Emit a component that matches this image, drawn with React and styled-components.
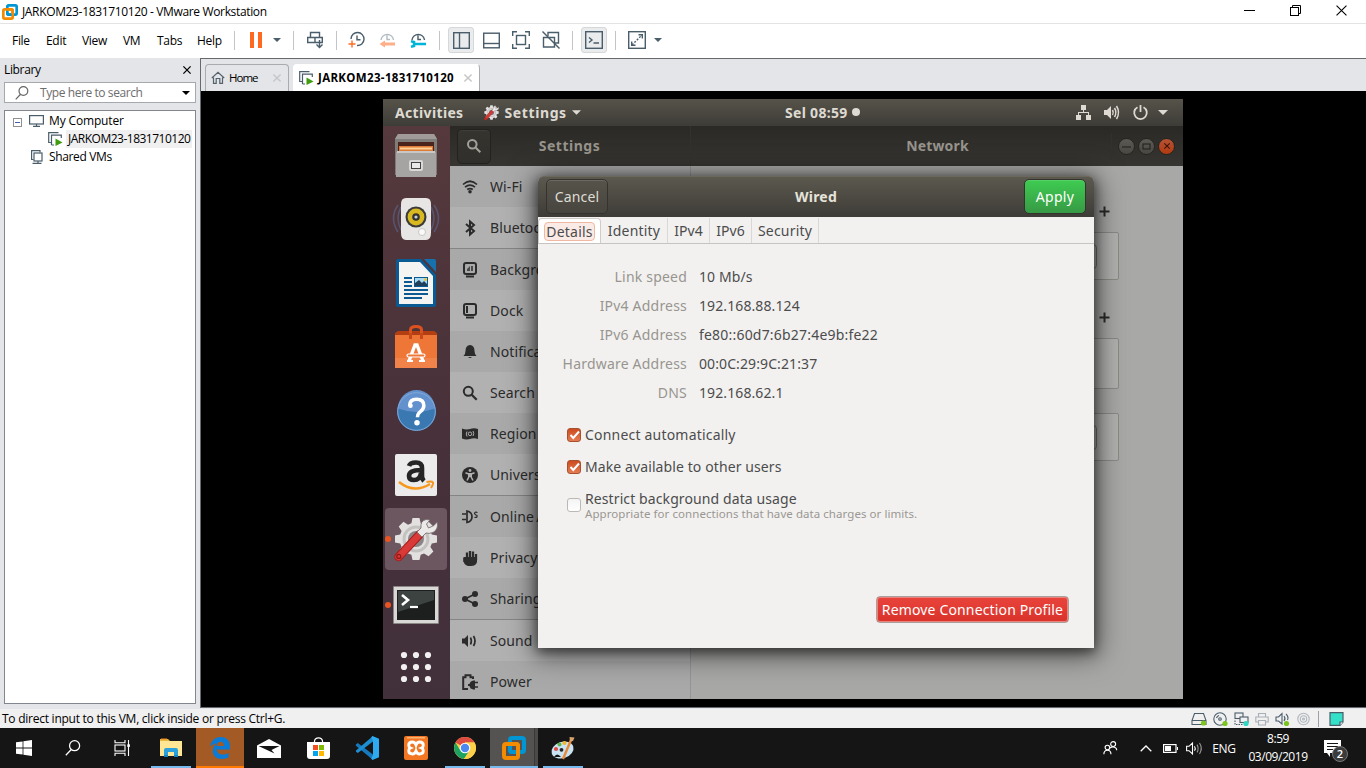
import React from 'react';
import styled, { createGlobalStyle, css } from 'styled-components';

const Global = createGlobalStyle`
  * { box-sizing: border-box; }
  html, body { margin: 0; padding: 0; background: #000; overflow: hidden; }
  svg { display: block; flex: none; overflow: visible; }
`;

const ui = css`font-family: "Open Sans", "Noto Sans", sans-serif; font-size: 12px; letter-spacing: -0.35px;`;
const gnome = css`font-family: "Noto Sans", "Open Sans", sans-serif; font-size: 14px; letter-spacing: 0.1px;`;

const Screen = styled.div`
  width: 1366px; height: 768px; display: flex; flex-direction: column;
  overflow: hidden; color: #000; white-space: nowrap; ${ui}
`;
const Text = styled.span`
  ${p => p.$ls !== undefined && css`letter-spacing: ${p.$ls}px;`}
  flex: none;
`;

/* ---------- host window ---------- */
const TitleBar = styled.header`
  height: 24px; background: #fff; display: flex; align-items: center; flex: none;
  padding: 0 19px 0 2px; border-bottom: 1px solid #e3e3e3;
`;
const TitleText = styled(Text)`margin-left: 4px; flex: 1;`;
const WinButtons = styled.div`display: flex; gap: 35px; align-items: center; margin-top: -3px;`;

const ToolBar = styled.nav`
  height: 34px; background: #fff; display: flex; align-items: center; flex: none; padding: 0 0 2px 12px;
`;
const MenuItem = styled.span`width: ${p => p.$w}px; flex: none; letter-spacing: -0.3px;`;
const Sep = styled.i`width: 1px; height: 19px; background: #c3c5c8; flex: none; margin: 0 ${p => p.$r ?? 0}px 0 ${p => p.$l ?? 0}px;`;
const Slot = styled.span`
  width: ${p => p.$w}px; height: 26px; display: flex; align-items: center; justify-content: center; flex: none;
  gap: ${p => p.$gap ?? 0}px; margin-right: ${p => p.$mr ?? 0}px; padding-left: ${p => p.$pl ?? 0}px;
  ${p => p.$on && css`background: #e9ebec; border: 1px solid #d5d7d8; border-radius: 3px;`}
`;

const Body = styled.main`height: 651px; display: flex; flex: none; background: #e3e5e8;`;
const Library = styled.aside`width: 200px; padding: 0 4px 5px; display: flex; flex-direction: column; flex: none;`;
const LibraryHead = styled.div`height: 24px; display: flex; align-items: center; justify-content: space-between; padding: 0 5px 1px 0;`;
const SearchBox = styled.div`
  height: 21px; border: 1px solid #a5a8ad; background: #fff; display: flex; align-items: center;
  padding: 0 5px 0 10px; color: #6d6d6d; flex: none;
`;
const SearchLabel = styled(Text)`margin-left: 11px; flex: 1;`;
const Tree = styled.div`flex: 1; margin-top: 7px; border: 1px solid #82878f; background: #fff; padding-top: 1px;`;
const TreeRow = styled.div`height: 18px; display: flex; align-items: center; padding-left: ${p => p.$pad}px;`;
const Expander = styled.span`margin: 2px 7px 0 0;`;
const TreeLabel = styled(Text)`
  height: 18px; line-height: 18px; padding: 0 2px; margin-left: 3px;
  background: ${p => (p.$sel ? '#f0f0f0' : 'transparent')};
`;

const Main = styled.section`
  flex: 1; border: 1px solid #66696d; border-right: 0; display: flex; flex-direction: column; margin-bottom: 1px;
`;
const Tabs = styled.div`height: 32px; display: flex; align-items: flex-end; padding-left: 4px; flex: none;`;
const Tab = styled.div`
  width: ${p => p.$w}px; height: 27px; display: flex; align-items: center; padding: 0 7px 1px 5px;
  border: 1px solid ${p => (p.$active ? '#fff' : '#a9abae')}; border-right-color: #a9abae; border-bottom: 0; border-radius: 4px 4px 0 0;
  background: ${p => (p.$active ? '#fff' : '#e3e5e8')}; margin-right: 4px; font-weight: ${p => (p.$active ? 700 : 400)};
  font-size: 11.5px;
`;
const TabLabel = styled(Text)`margin-left: 4px; flex: 1;`;
const Stage = styled.div`flex: 1; background: #000; padding: 8px 0 0 182px;`;

const StatusBar = styled.footer`
  height: 19px; background: #f0f0f0; display: flex; align-items: center; flex: none;
  padding: 0 22px 0 2px;
`;
const StatusText = styled(Text)`flex: 1;`;
const StatusIcons = styled.div`display: flex; align-items: center; gap: 6px; padding-top: 1px;`;
const StatusRule = styled.i`width: 1px; height: 16px; background: #9aa0a5; margin: 0 3px 0 1px;`;

/* ---------- taskbar ---------- */
const TaskBar = styled.footer`height: 40px; background: #151515; display: flex; flex: none; color: #fff; font-size: 12px;`;
const TaskButtons = styled.div`display: flex; gap: 1px; flex: 1;`;
const TaskButton = styled.div`
  width: 48px; height: 40px; display: flex; align-items: center; justify-content: center; flex: none;
  background: ${p => p.$bg || 'transparent'};
  box-shadow: ${p => (p.$wide ? `inset 0 -2px ${p.$wide}` : 'none')};
  position: relative;
  &::after { content: ''; display: ${p => (p.$open ? 'block' : 'none')}; position: absolute; left: 4px; right: 4px; bottom: 0; height: 2px; background: #76b9ed; }
`;
const Tray = styled.div`display: flex; align-items: center; padding-right: 16px;`;
const TrayItem = styled.div`width: ${p => p.$w}px; display: flex; justify-content: center;`;
const Clock = styled.div`width: 72px; text-align: center; line-height: 18px; height: 38px; padding-top: 1px; letter-spacing: -0.45px;`;
const Notice = styled.div`width: 36px; position: relative; display: flex; justify-content: center;`;
const Badge = styled.span`
  position: absolute; left: 18px; top: 6px; width: 16px; height: 16px; border-radius: 50%; background: #3b3b3b;
  border: 1px solid #777; font-size: 11px; font-weight: 600; line-height: 14px; text-align: center; letter-spacing: 0;
`;

/* ---------- guest desktop ---------- */
const Guest = styled.div`
  width: 800px; height: 600px; display: flex; flex-direction: column; position: relative; overflow: hidden; ${gnome}
`;
const TopBar = styled.div`
  height: 27px; flex: none; display: grid; grid-template-columns: 390px 1fr auto; align-items: center;
  background: linear-gradient(#56534a, #3e3c37); color: #dedad2; font-weight: 700; padding: 0 15px 1px 12px;
`;
const TopGroup = styled.div`display: flex; align-items: center; gap: ${p => p.$gap}px;`;
const AppName = styled(Text)`margin: 0 5px 0 6px;`;
const StartGap = styled.span`width: ${p => p.$w}px;`;
const MenuCaret = styled.span`margin-left: -3px;`;
const Desktop = styled.div`flex: 1; display: flex; min-height: 0;`;
const Dock = styled.div`
  width: 67px; flex: none; background: linear-gradient(#55393c, #46303a 60%, #41303a); display: flex; flex-direction: column; overflow: hidden;
`;
const DockItem = styled.div`
  height: ${p => p.$h ?? 64}px; flex: none; display: flex; align-items: center; padding-left: 2px;
`;
const DockTile = styled.div`
  width: 62px; height: 62px; display: flex; align-items: center; justify-content: center; border-radius: 4px;
  background: ${p => (p.$on ? '#6c565f' : 'transparent')};
`;
const Dot = styled.i`width: 6px; height: 6px; border-radius: 50%; background: #e95420; margin-right: -6px; flex: none; z-index: 1;`;

const Window = styled.div`flex: 1; display: flex; flex-direction: column; min-width: 0;`;
const HeaderBar = styled.div`
  height: 40px; flex: none; display: flex; align-items: center; color: #97948d; font-weight: 700;
  background: linear-gradient(#2a2925, #373531);
`;
const HeaderLeft = styled.div`width: 241px; height: 40px; display: flex; align-items: center; padding-left: 7px; border-right: 1px solid #32312d;`;
const SearchButton = styled.div`
  width: 34px; height: 35px; border: 1px solid #23221f; border-radius: 5px; display: flex; align-items: center; justify-content: center;
  background: linear-gradient(#35342f, #302f2b); box-shadow: inset 0 1px rgba(255,255,255,.05);
`;
const HeaderTitle = styled.div`flex: 1; text-align: center; letter-spacing: ${p => p.$ls ?? 0}px; padding: 0 ${p => p.$pr ?? 0}px 2px ${p => p.$pl ?? 0}px;`;
const WindowButtons = styled.div`display: flex; gap: 3px; padding: 0 8px 0 6px; border-left: 1px solid #32312d; height: 27px; align-items: center;`;
const RoundButton = styled.div`
  width: 17px; height: 17px; border-radius: 50%; border: 1px solid #25241f; display: flex; align-items: center; justify-content: center;
  background: ${p => (p.$close ? 'linear-gradient(#b45336, #b23a10)' : 'linear-gradient(#5b5a55, #484742)')};
`;
const Panes = styled.div`flex: 1; display: flex; min-height: 0;`;
const SideList = styled.div`width: 241px; flex: none; border-right: 1px solid #959593; overflow: hidden; background: #aaa;`;
const SideRow = styled.div`
  height: ${p => (p.$sep ? 42 : 41)}px; display: flex; align-items: center; padding-left: 12px; color: #2b2b2b; word-spacing: -1.5px;
  background: ${p => (p.$alt ? '#b1b1b1' : '#a9a9a9')}; border-bottom: ${p => (p.$sep ? '1px solid #858585' : '0')};
`;
const SideIcon = styled.span`width: 16px; height: 16px; display: flex; align-items: center; justify-content: center; margin-right: 12px;`;
const Content = styled.div`flex: 1; background: #a8a8a6; padding: 32px 64px 0 66px;`;
const SectionHead = styled.div`height: ${p => p.$h}px; padding-top: 8px; padding-right: 9px; display: flex; justify-content: flex-end;`;
const Card = styled.div`
  height: ${p => p.$h}px; margin-bottom: ${p => p.$mb}px; border: 1px solid #8b8b86; border-radius: 2px; background: #b1b1b0;
  display: flex; align-items: center; justify-content: flex-end; padding-right: 21px;
`;
const GearButton = styled.div`width: 34px; height: 25px; border: 1px solid #757570; border-radius: 4px;`;

/* ---------- connection dialog ---------- */
const Dialog = styled.div`
  position: absolute; left: 155px; top: 77px; width: 556px; height: 472px; border-radius: 6px 6px 0 0; overflow: visible;
  background: #f2f1f0; box-shadow: 0 3px 12px 1px rgba(0,0,0,.5), 0 4px 28px 4px rgba(0,0,0,.5); color: #4c4c4c;
`;
const DialogHead = styled.div`
  height: 41px; border-radius: 6px 6px 0 0; display: flex; align-items: center; justify-content: space-between; padding: 0 8px 0 8px;
  background: linear-gradient(#5c594f, #3e3c37); box-shadow: inset 0 1px #6a675d; color: #e6e3da;
`;
const HeadButton = styled.div`
  width: ${p => p.$w}px; height: 35px; border-radius: 5px; border: 1px solid #34332e; text-align: center; line-height: 33px;
  letter-spacing: ${p => p.$ls}px; color: ${p => (p.$go ? '#fff' : '#dfdcd3')};
  background: ${p => (p.$go ? 'linear-gradient(#3ecb51, #379a45)' : 'linear-gradient(#56534a, #47453f)')};
  box-shadow: inset 0 1px rgba(255,255,255,.13);
`;
const TabStrip = styled.div`height: 27px; display: flex; border-bottom: 1px solid #c6c4c1; padding: 1px 0 0;`;
const PageTab = styled.div`
  width: ${p => p.$w}px; height: 25px; display: flex; align-items: center; justify-content: center; letter-spacing: ${p => p.$ls ?? 0.2}px;
  border-right: 1px solid #dad8d6;
  ${p => p.$on && css`background: #fff; border: 1px solid #cfccc9; border-bottom: 0; border-radius: 4px 4px 0 0;`}
`;
const FocusRing = styled.span`border: 1px solid #f0b7a1; background: #fbebe6; border-radius: 4px; line-height: 17px; height: 19px; padding: 0 1px;`;
const Facts = styled.dl`
  margin: 18px 0 0; display: grid; grid-template-columns: 149px 1fr; column-gap: 12px; grid-auto-rows: 29px; align-items: center;
`;
const FactName = styled.dt`text-align: right; color: #98958f; letter-spacing: 0.2px;`;
const FactValue = styled.dd`margin: 0; letter-spacing: ${p => p.$ls ?? 0.1}px;`;
const CheckRow = styled.label`display: flex; align-items: center; height: ${p => p.$h ?? 32}px; padding-left: 29px; gap: 4px;`;
const CheckList = styled.div`margin-top: 11px;`;
const Box = styled.span`
  width: 14px; height: 14px; border-radius: 3px; display: flex; align-items: center; justify-content: center; flex: none; margin-top: ${p => (p.$on ? 1 : 0)}px;
  border: 1px solid ${p => (p.$on ? '#a9502f' : '#bcb9b5')}; background: ${p => (p.$on ? 'linear-gradient(#cb4c20, #e57b51)' : 'linear-gradient(#f4f4f4,#fff)')};
`;
const CheckText = styled.div`display: flex; flex-direction: column; line-height: 16px; padding-top: 2px;`;
const Hint = styled.span`font-size: 11.5px; color: #9a9792; line-height: 14px; letter-spacing: 0.06px;`;
const DialogFoot = styled.div`display: flex; justify-content: flex-end; padding: 68px 25px 0 0;`;
const RemoveButton = styled.div`
  width: 193px; height: 27px; border: 1px solid #a8a09b; border-radius: 4px; color: #fff; text-align: center; line-height: 25px;
  background: linear-gradient(#e9443c, #d9322a); box-shadow: inset 0 0 0 1px #f0827c; letter-spacing: 0.15px;
`;

/* ---------- icons ---------- */
const ink = '#4a5d6b';
const VmLogo = ({ s = 16 }) => (
  <svg width={s} height={s} viewBox="0 0 24 24" fill="none" strokeWidth="4">
    <rect x="8" y="2" width="14" height="14" rx="2" stroke="#0095d3" />
    <rect x="2" y="8" width="14" height="14" rx="2" stroke="#f38b00" />
    <path d="M8 12.5V14Q8 16 10 16H14" stroke="#0095d3" />
    <path d="M10 8H14Q16 8 16 10V14" stroke="#f38b00" />
  </svg>
);
const Caret = ({ w = 8, h = 4, c = ink }) => (
  <svg width={w} height={h} viewBox="0 0 8 4"><path d="M0 0H8L4 4Z" fill={c} /></svg>
);
const Cross = ({ s = 9, c = '#000', w = 1.2 }) => (
  <svg width={s} height={s} viewBox="0 0 10 10" stroke={c} strokeWidth={w}><path d="M.5 .5L9.5 9.5M9.5 .5L.5 9.5" /></svg>
);
const Line = ({ w = 20, h = 20, children, c = ink, sw = 1.4 }) => (
  <svg width={w} height={h} viewBox={`0 0 ${w} ${h}`} fill="none" stroke={c} strokeWidth={sw}>{children}</svg>
);
const SendKeys = () => (
  <Line w={16} h={18}><path d="M3.5 6.5V1.5H12.5V6.5M.7 6.5H15.3V11.5H.7ZM8 6.5V11.5M12.5 9V16M9.5 13.5L12.5 16.5L15.5 13.5" /></Line>
);
const ClockIcon = ({ mode }) => (
  <Line w={18} h={18} c={mode === 'back' ? '#b4bcc3' : ink}>
    <path d={mode === 'add' ? 'M3 8A6.5 6.5 0 1 1 9 14.5M9 4.5V8.7H12.5' : 'M3 9A6.3 6.3 0 0 1 15.5 9M9 4.5V8.5H12'} />
    {mode === 'add' && <path d="M4 9.5V16.5M.5 13H7.5" stroke="#ff6a22" />}
    {mode === 'back' && <path d="M17 13H6" stroke="#ffae88" strokeWidth="3" />}
    {mode === 'back' && <path d="M7 9.5V16.5L1.5 13Z" fill="#ffae88" stroke="none" />}
    {mode === 'manage' && <path d="M17 13H6M2 10.2L5 11V15L2 15.8" stroke="#00b4d5" strokeWidth="2.6" />}
  </Line>
);
const LibraryPane = () => <Line w={17} h={17}><rect x=".7" y=".7" width="15.6" height="15.6" /><path d="M6.5 1V16" /></Line>;
const BottomPane = () => <Line w={17} h={17}><rect x=".7" y="1.2" width="15.6" height="14.6" /><path d="M1 11.5H16" /></Line>;
const FitGuest = () => <Line w={18} h={18}><path d="M.7 5V.7H5M13 .7H17.3V5M17.3 13V17.3H13M5 17.3H.7V13" /><rect x="4.5" y="4.5" width="9" height="9" /></Line>;
const Unity = () => <Line w={18} h={18}><path d="M6 5V1.5H16.5V12H13M1.5 6.5V16H12.5V6.5Z" /><path d="M.5 .5L17.5 17.5" /></Line>;
const ConsoleIcon = () => <Line w={18} h={18}><rect x=".7" y=".7" width="16.6" height="16.6" /><path d="M4 6.5L7 9L4 11.5M8.5 12H14" /></Line>;
const FullIcon = () => <Line w={18} h={18}><rect x=".7" y=".7" width="16.6" height="16.6" /><path d="M10.5 3.7H14.3V7.5M3.7 10.5V14.3H7.5" /><path d="M4 14L14 4" strokeDasharray="2 1.4" /></Line>;
const HomeIcon = () => <Line w={14} h={13} c="#55626d" sw={1.2}><path d="M.8 7L7 1.2L13.2 7M2.5 6.5V12.3H5.2V7.5H8.8V12.3H11.5V6.5" /></Line>;
const VmRunning = () => (
  <Line w={15} h={14} sw={1.2}><path d="M3 10.5H.7V.7H10.5M3.5 13V3.2H13.3V6M3.5 13H6" /><path d="M7.5 6.5L14.5 10.5L7.5 14Z" fill="#3f9c0e" stroke="none" /></Line>
);
const Monitor = () => <Line w={15} h={12} sw={1.2}><rect x=".6" y=".6" width="13.8" height="8.4" /><path d="M7.5 9V11M4 11.4H11" /></Line>;
const SharedVm = () => <Line w={12} h={14} sw={1.2}><path d="M2.5 9.5H.6V.6H9V2.5" /><rect x="3" y="3" width="8" height="8" /><path d="M7 11V13M1.5 13.4H10.5" /></Line>;
const Lens = ({ s = 14, c = '#666', w = 1.2, flip }) => (
  <svg width={s} height={s} viewBox="0 0 14 14" fill="none" stroke={c} strokeWidth={w}>
    {flip ? <path d="M5.3 8.5L.7 13.3M4 5A4.4 4.4 0 1 0 12.8 5A4.4 4.4 0 1 0 4 5" /> : <path d="M8.8 8.8L13.3 13.3M1 5.3A4.3 4.3 0 1 0 9.6 5.3A4.3 4.3 0 1 0 1 5.3" />}
  </svg>
);
const Green = ({ x, y, c = '#7cc51c' }) => <circle cx={x} cy={y} r="2.6" fill={c} stroke="none" />;
const StatusSet = () => (
  <StatusIcons>
    <Line w={16} h={14} sw={1.1}><path d="M3.5 1.5H12.5L15 8.5V12.5H1V8.5ZM1 8.5H15" /><Green x={12.5} y={11} /></Line>
    <Line w={15} h={14} sw={1.1}><circle cx="7" cy="7" r="6.2" /><circle cx="7" cy="7" r="1.3" /><path d="M3.5 6A4 4 0 0 1 6 3.5" /><Green x={12} y={11.5} /></Line>
    <Line w={15} h={14} sw={1.1}><rect x="1" y="1" width="8" height="5.5" /><rect x="6" y="5" width="8" height="5.5" fill="#f0f0f0" /><path d="M1 8.5V12.5H9" strokeDasharray="1.5 1" /><Green x={12} y={11.5} c="#2fd6c2" /></Line>
    <Line w={14} h={14} sw={1.1} c="#a8b0b7"><path d="M3.5 5V1.5H10.5V5M3.5 10H.8V5H13.2V10H10.5M3.5 8.5H10.5V13H3.5Z" /></Line>
    <Line w={15} h={14} sw={1.1}><path d="M1 5H3.5L7 1.5V12L3.5 9H1ZM9 4Q11 6.5 9 9M11 2Q14 5 12.5 8" /><Green x={11.5} y={11.5} /></Line>
    <Line w={15} h={14} sw={1.1} c="#b0b7bd"><circle cx="7.5" cy="7" r="5.7" /><circle cx="7.5" cy="7" r="3.2" /><circle cx="7.5" cy="7" r="1" /></Line>
    <StatusRule />
    <Line w={16} h={14} sw={1.2}><path d="M2 .6H15V10L12 13.4H2Z" fill="#35e0c8" /><path d="M15 10H12V13.4" fill="#fff" /></Line>
  </StatusIcons>
);

const WinStart = () => <svg width="16" height="16" viewBox="0 0 16 16" fill="#fff"><path d="M0 2.3L6.6 1.4V7.6H0ZM7.4 1.3L16 0V7.6H7.4ZM0 8.4H6.6V14.6L0 13.7ZM7.4 8.4H16V16L7.4 14.8Z" /></svg>;
const TaskView = () => (
  <svg width="17" height="16" viewBox="0 0 17 16" fill="none" stroke="#fff" strokeWidth="1.1"><path d="M1 0V2.7H11V0M1 16V13.3H11V16M14.5 0V16" /><rect x="1" y="5" width="10" height="6" /><rect x="13.3" y="4.3" width="2.6" height="2.6" fill="#fff" stroke="none" /></svg>
);
const Explorer = () => (
  <svg width="22" height="20" viewBox="0 0 22 20"><path d="M0 1H8L10 3H21Q22 3 22 4V18H0Z" fill="#e8b93c" /><path d="M1 3H22V18H0V3Z" fill="#ffe695" /><path d="M1 1H7" stroke="#f08a24" strokeWidth="1" /><path d="M4 19V12Q4 10 6 10H16Q18 10 18 12V19H14V14H8V19Z" fill="#2aa0dc" /><path d="M4 18H8M14 18H18" stroke="#1583bf" strokeWidth="2" /></svg>
);
const Edge = () => (
  <svg width="20" height="22" viewBox="0 0 20 22"><path d="M0 10C1 3 6 0 10.8 0C17 0 20 4.6 20 9.2V12.4H6.8C7 16 10 17.5 13 17.5C15.3 17.5 17.3 16.8 18.6 16V20.3C17 21.3 14.6 22 12 22C6 22 2.8 18.5 2.8 14C2.8 10.8 4.5 8 7.4 6.6C4.2 6.8 1.6 8 0 10ZM6.9 8.9H14C14 6.5 13 4.8 10.6 4.8C8.4 4.8 7.1 6.8 6.9 8.9Z" fill="#0b7bd8" /></svg>
);
const Mail = () => <svg width="24" height="19" viewBox="0 0 24 19"><path d="M0 6.5L12 0L24 6.5V19H0Z" fill="#fff" /><path d="M1.5 7H22.5L14.5 11L17.5 14.5Z" fill="#151515" /></svg>;
const Store = () => (
  <svg width="23" height="22" viewBox="0 0 23 22"><path d="M7.5 6V4Q8 .8 11.5 .8Q15 .8 15.5 4V6" fill="none" stroke="#fff" strokeWidth="1.2" /><path d="M0 5H23V19Q23 22 20 22H3Q0 22 0 19Z" fill="#fff" /><path d="M6 8H11V13H6Z" fill="#f25022" /><path d="M12 8H17V13H12Z" fill="#7fba00" /><path d="M6 14H11V19H6Z" fill="#00a4ef" /><path d="M12 14H17V19H12Z" fill="#ffb900" /></svg>
);
const Code = () => (
  <svg width="24" height="24" viewBox="0 0 24 24"><path d="M1.2 8.3L2.8 7L18 18.5V24L.9 9.8L.7 8.7Z" fill="#1679bd" /><path d="M1 15.7L2.8 17L18 5.5V0L1 14.6Z" fill="#1d8fd1" /><path d="M17.5 0L24 2.8V21.2L17.5 24L16.3 22.8L18 18.7V5.3L16.3 1.2Z" fill="#2fa9f0" /></svg>
);
const Xampp = () => (
  <svg width="24" height="24" viewBox="0 0 24 24"><rect width="24" height="24" rx="2" fill="#f37623" /><path d="M3 1.8H21" stroke="#ffc08a" strokeWidth="1.2" /><path d="M8.5 6Q11 6 12 9Q13 6 15.5 6Q19.3 6 19.3 9.2Q19.3 11.2 17.5 12Q19.3 12.8 19.3 14.8Q19.3 18 15.5 18Q13 18 12 15Q11 18 8.5 18Q4.7 18 4.7 14.8Q4.7 12.8 6.5 12Q4.7 11.2 4.7 9.2Q4.7 6 8.5 6Z" fill="none" stroke="#fff" strokeWidth="2.9" /></svg>
);
const Chrome = () => (
  <svg width="22" height="22" viewBox="0 0 22 22"><circle cx="11" cy="11" r="11" fill="#fcd048" /><path d="M11 11L1.5 5.5A11 11 0 0 1 20.6 5.6H11Z" fill="#de4c41" /><path d="M1.5 5.5A11 11 0 0 0 10 21.9L15.5 13.5L11 11L6 13Z" fill="#1ca261" /><path d="M11 5.6H20.6A11 11 0 0 1 10 21.9L15.8 13.5Z" fill="#fcd048" /><circle cx="11" cy="11" r="5.3" fill="#fff" /><circle cx="11" cy="11" r="4.2" fill="#4b88f2" /></svg>
);
const Paint = () => (
  <svg width="24" height="24" viewBox="0 0 24 24"><ellipse cx="11.5" cy="14" rx="11.3" ry="8.2" fill="#c9e3f2" transform="rotate(-18 11.5 14)" /><path d="M3 21Q6 16 10 21" fill="#151515" /><circle cx="5" cy="13" r="2.1" fill="#dd4b47" /><circle cx="8.5" cy="8.6" r="2" fill="#5cb54b" /><circle cx="13.5" cy="7" r="2.1" fill="#f4b52a" /><circle cx="10.5" cy="13.8" r="1.9" fill="#222" /><path d="M20 4L12 23" stroke="#e98935" strokeWidth="2.4" /><path d="M18.5 1L23.5 1.5L22 5L19 5.5Z" fill="#d8a570" /></svg>
);
const People = () => <svg width="15" height="16" viewBox="0 0 17 17" fill="none" stroke="#fff" strokeWidth="1.3"><circle cx="5" cy="8" r="2.6" /><circle cx="11.5" cy="4" r="2.8" /><path d="M1 15.5Q1 11 5 11Q9 11 9 15.5M8 8.5Q11.5 5.5 15 9Q15.5 10 15.5 11" /></svg>;
const Chevron = () => <svg width="12" height="7" viewBox="0 0 12 7" fill="none" stroke="#fff" strokeWidth="1.3"><path d="M.7 6.3L6 1L11.3 6.3" /></svg>;
const Battery = () => <svg width="15" height="9" viewBox="0 0 15 9"><rect x=".6" y=".6" width="12.4" height="7.8" fill="none" stroke="#fff" strokeWidth="1.2" /><path d="M2 2H8V7H2ZM14 3H15V6H14Z" fill="#fff" /></svg>;
const TrayVolume = () => <svg width="17" height="13" viewBox="0 0 17 13" fill="none" stroke="#fff" strokeWidth="1.1"><path d="M.6 4.3H3L6.5 1V12L3 8.7H.6ZM8.5 4.3Q10 6.5 8.5 8.7" /><path d="M11 2.6Q13.3 6.5 11 10.4M13.5 1Q17 6.5 13.5 12" stroke="#999" /></svg>;
const NoticeIcon = () => <svg width="17" height="17" viewBox="0 0 17 17"><path d="M0 0H17V13H6L6 17L3 13H0Z" fill="#fff" /><path d="M3 3.5H14M3 6.5H14M3 9.5H9" stroke="#151515" strokeWidth="1.1" /></svg>;

const gearPath = 'M18.5 1H25.5L26.7 6.3L30 7.7L34.6 4.8L39.4 9.6L36.4 14.1L37.8 17.5L43 18.5V25.5L37.8 26.6L36.4 30L39.4 34.5L34.6 39.3L30 36.4L26.7 37.8L25.5 43H18.5L17.4 37.8L14 36.4L9.5 39.3L4.7 34.5L7.6 30L6.2 26.6L1 25.5V18.5L6.2 17.5L7.6 14.1L4.7 9.6L9.5 4.8L14 7.7L17.4 6.3Z';
const SettingsIcon = ({ s = 44 }) => (
  <svg width={s} height={s} viewBox="0 0 44 44"><path d={gearPath} fill="#e2e1e0" /><circle cx="22" cy="22" r="12" fill="none" stroke="#c4c2c1" strokeWidth="3" /><circle cx="22" cy="22" r="8" fill="#8b8588" />
    <path d="M26 17L4.5 40" stroke="#a51d1d" strokeWidth="8.5" strokeLinecap="round" /><path d="M26 17L4.5 40" stroke="#d93a37" strokeWidth="6.5" strokeLinecap="round" /><circle cx="4.8" cy="39.4" r="2" fill="none" stroke="#8e1818" strokeWidth="1.2" />
    <path d="M23 15L27 11Q26 4 32 2.5L36 3L32.5 7L34.5 11L40 8.5L43 5Q45 12 39 15.5Q35 17 32 16L28 20Z" fill="#eceae8" stroke="#77706f" strokeWidth=".9" /></svg>
);
const Files = () => (
  <svg width="44" height="44" viewBox="0 0 44 44"><path d="M4 0H40L43 5V41H1V5Z" fill="#807c7a" /><path d="M4 0H40L43 5H1Z" fill="#a09b99" /><rect x="4" y="8" width="36" height="11" fill="#4b241c" /><path d="M5 12H39V18H5Z" fill="#e07a34" /><path d="M6 14.5H38" stroke="#ffd098" strokeWidth="2" /><path d="M2 19Q2 17 4 17H40Q42 17 42 19V43H2Z" fill="#a5a4a3" /><path d="M3 18H41" stroke="#d3d3d2" strokeWidth="1.5" /><rect x="15" y="26" width="14" height="11" rx="2" fill="#dad9d8" /><rect x="17.5" y="28.5" width="9" height="6" fill="#e9e9e9" stroke="#444" /></svg>
);
const Rhythmbox = () => (
  <svg width="46" height="46" viewBox="0 0 46 46"><path d="M5 9Q-4 22 5 36M41 9Q50 22 41 36M8 11Q2 22 8 34M38 11Q44 22 38 34" fill="none" stroke="#5c6791" strokeWidth="1.6" opacity=".6" /><path d="M13 2H33Q38 2 38 8V37Q38 44 33 44H13Q8 44 8 37V8Q8 2 13 2Z" fill="#e7e6e4" /><circle cx="23" cy="21" r="10.5" fill="#3b3b3b" /><circle cx="23" cy="21" r="8.4" fill="#d9b820" /><circle cx="23" cy="21" r="3.8" fill="#333" /><circle cx="23" cy="21" r="1.6" fill="#c9d0d6" /><circle cx="29" cy="36" r="3.5" fill="#fafafa" stroke="#c9c8c6" /></svg>
);
const Writer = () => (
  <svg width="40" height="48" viewBox="0 0 40 48"><path d="M2 0H25L40 16V46Q40 48 38 48H2Q0 48 0 46V2Q0 0 2 0Z" fill="#0a5a94" /><path d="M28 0H38Q40 0 40 2V13Z" fill="#1671ae" /><path d="M3 3H24L37 17V45H3Z" fill="#f4f4f3" /><path d="M8 19H16M8 23H16M8 27H16M8 31H32M8 35H32M8 39H26" stroke="#0a5a94" strokeWidth="2" /><rect x="18.5" y="18.5" width="13" height="9" fill="#a9dcf0" stroke="#0a5a94" /><path d="M19 27V24L23 21L26 24L28 22L31 25V27Z" fill="#20405a" /><circle cx="29.5" cy="20.5" r="1.5" fill="#f1c232" /></svg>
);
const Software = () => (
  <svg width="42" height="44" viewBox="0 0 42 44"><path d="M0 8L3 6H39L42 8V12H0Z" fill="#b23e12" /><path d="M15.5 14V5Q15.5 1.5 21 1.5Q26.5 1.5 26.5 5V14" fill="none" stroke="#dc521f" strokeWidth="3" /><path d="M0 10H42V43H0Z" fill="#ee7637" /><path d="M0 33H42V43H0Z" fill="#f1824a" /><path d="M15.5 14V8M26.5 14V8" stroke="#c8481a" strokeWidth="3" /><path d="M14 36L20 20H22L28 36" fill="none" stroke="#fff" strokeWidth="3.4" /><rect x="12" y="29" width="18" height="3" rx="1.5" fill="#ee7637" stroke="#fff" strokeWidth="1.2" /><path d="M12 36H18M24 36H30" stroke="#fff" strokeWidth="2" /></svg>
);
const Help = () => (
  <svg width="41" height="41" viewBox="0 0 42 42"><circle cx="21" cy="21" r="20" fill="#3a78b2" /><path d="M2 18A19 19 0 0 1 40 18Q21 25 2 18Z" fill="#6391cd" /><circle cx="21" cy="21" r="19.3" fill="none" stroke="#83a9d8" /><path d="M14 15C14 10 17 8.5 21 8.5C26 8.5 28.5 11 28.5 15C28.5 19 25.5 20.5 23.5 22.5Q22 24 22 27" fill="none" stroke="#fff" strokeWidth="3.6" /><circle cx="14.8" cy="15" r="2.4" fill="#fff" /><circle cx="21.5" cy="32.5" r="2.8" fill="#fff" /></svg>
);
const Amazon = () => (
  <svg width="42" height="42" viewBox="0 0 42 42"><rect width="42" height="42" rx="2" fill="#ebebeb" /><path d="M14 12Q15 8.5 21 8.5Q27 8.5 27 14V22Q27 25 29 27M26 16Q14 16 14 22Q14 26 19 26Q25 26 26 19" fill="none" stroke="#242424" strokeWidth="4.6" /><path d="M4 28Q19 40 35 30" fill="none" stroke="#f7981d" strokeWidth="2.6" /><path d="M31.5 28Q37 27 38 28.5Q38.5 30 36 34" fill="none" stroke="#f7981d" strokeWidth="2" /></svg>
);
const Terminal = () => (
  <svg width="46" height="38" viewBox="0 0 46 38"><rect width="46" height="38" rx="1" fill="#8a8785" /><rect x="1" y="1" width="44" height="36" fill="#d9d8d7" /><rect x="4" y="4" width="38" height="30" fill="#1c1f1e" /><path d="M5 5H41V14L5 26Z" fill="#3c4341" /><path d="M9 9L15 14L9 19" fill="none" stroke="#fff" strokeWidth="2.6" /><path d="M17 21H25" stroke="#fff" strokeWidth="2.2" /></svg>
);
const AppGrid = () => (
  <svg width="30" height="30" viewBox="0 0 30 30" fill="#f2f0f0">{[3, 15, 27].map(y => [3, 15, 27].map(x => <circle key={x + '-' + y} cx={x} cy={y} r="3.1" />))}</svg>
);

const NetIcon = () => <svg width="15" height="15" viewBox="0 0 15 15" fill="#dedad2"><path d="M5 0H10V5H5ZM0 10H5V15H0ZM10 10H15V15H10ZM7 5H8V7H13V10H12V8H3V10H2V7H7Z" /></svg>;
const VolIcon = () => <svg width="16" height="15" viewBox="0 0 16 15"><path d="M0 5H3L7 1V14L3 10H0Z" fill="#dedad2" /><path d="M8.5 5Q10 7.5 8.5 10M10.5 3Q13.2 7.5 10.5 12M12.5 1Q16.5 7.5 12.5 14" fill="none" stroke="#dedad2" strokeWidth="1.5" /></svg>;
const PowerIcon = () => <svg width="15" height="15" viewBox="0 0 15 15" fill="none" stroke="#dedad2" strokeWidth="1.8"><path d="M4.5 2.2A6.3 6.3 0 1 0 10.5 2.2M7.5 0V7" /></svg>;

const dark = '#2b2b2b';
const G = ({ children }) => <svg width="16" height="16" viewBox="0 0 16 16" fill={dark} stroke="none">{children}</svg>;
const sideIcons = {
  wifi: <G><g fill="none" stroke={dark} strokeWidth="1.7"><path d="M1 5.5Q8 -1 15 5.5M3 8.2Q8 4 13 8.2M5.2 10.5Q8 8.6 10.8 10.5" /></g><circle cx="8" cy="12.7" r="1.8" /></G>,
  bt: <G><path d="M4 4L12 11L8 14.5V1.5L12 5L4 12" fill="none" stroke={dark} strokeWidth="2" /></G>,
  bg: <G><rect x="2" y="1" width="12" height="11" rx="2" fill="none" stroke={dark} strokeWidth="2" /><path d="M5 9V7L8 4V9ZM9 4H11V9H9Z" opacity=".75" /><path d="M4 14.5H12" stroke={dark} strokeWidth="2" /></G>,
  dock: <G><rect x="2" y="1" width="12" height="11" rx="2" fill="none" stroke={dark} strokeWidth="2" /><path d="M4 3H6V10H4Z" /><path d="M4 14.5H12" stroke={dark} strokeWidth="2" /></G>,
  bell: <G><path d="M8 1Q12.5 1.5 12.5 7Q12.5 10 14.5 12H1.5Q3.5 10 3.5 7Q3.5 1.5 8 1ZM6 13H10Q8 15 6 13Z" /></G>,
  search: <G><circle cx="6.3" cy="6.3" r="4.5" fill="none" stroke={dark} strokeWidth="2" /><path d="M9.7 9.7L14.7 14.7" stroke={dark} strokeWidth="2.3" /></G>,
  region: <G><path d="M0 2.5Q4 4 8 3Q12 1.5 16 3V13Q12 11.5 8 13Q4 14 0 12.5V2Z" /><path d="M5 5.5Q3.5 8 5 10.5M11 5Q12.5 7.5 11 10" fill="none" stroke="#aaa" /><circle cx="8" cy="7.8" r="1.8" fill="none" stroke="#aaa" /></G>,
  access: <G><circle cx="8" cy="8" r="8" /><circle cx="8" cy="3.5" r="1.4" fill="#b1b1b1" /><path d="M3.5 5.7L6.8 7V10L5 13.5M12.5 5.7L9.2 7V10L11 13.5" fill="none" stroke="#b1b1b1" strokeWidth="1.5" /><path d="M6 6H10V10H6Z" fill="#b1b1b1" /></G>,
  online: <G><path d="M0 5H4M0 10.5H4" stroke={dark} strokeWidth="1.7" /><path d="M5 2V13.5Q10 12.5 10 7.8Q10 3 5 2Z" fill="none" stroke={dark} strokeWidth="1.7" /><path d="M15.5 3.5Q12.5 2.5 12.5 4.5Q13 5.7 15 6.5Q15.5 9 12.5 8.3" fill="none" stroke={dark} strokeWidth="1.2" /></G>,
  hand: <G><path d="M5 2.5V9M8 1V9M11 1.5V9M14 4V10M2.5 8V12" stroke={dark} strokeWidth="2.3" /><path d="M1.5 7H15V12Q14 16 9 16H6Q2 15 1.5 11Z" /></G>,
  share: <G><path d="M13 3L3 8L13 13" fill="none" stroke={dark} strokeWidth="1.8" /><circle cx="13" cy="3" r="3" /><circle cx="3" cy="8" r="3" /><circle cx="13" cy="13" r="3" /></G>,
  sound: <G><path d="M0 5.5H2.5L6 2V14L2.5 10.5H0Z" /><path d="M8.5 4.5Q10.2 8 8.5 11.5M11.5 3Q14.5 8 11.5 13" fill="none" stroke={dark} strokeWidth="1.7" /></G>,
  power: <G><path d="M6 15H1.2V3.2H3.5V1.2H8.5V3.2H11V5" fill="none" stroke={dark} strokeWidth="2" /><path d="M13 6.5V15.5H11.5Q8 15 7.5 12H6V10H7.5Q8 7 11.5 6.5Z" /><path d="M13 8.5H16M13 13H16" stroke={dark} strokeWidth="1.6" /></G>,
};

const sideItems = [
  ['wifi', 'Wi-Fi'], ['bt', 'Bluetooth', true], ['bg', 'Background'], ['dock', 'Dock'], ['bell', 'Notifications'], ['search', 'Search'],
  ['region', 'Region & Language'], ['access', 'Universal Access', true], ['online', 'Online Accounts'], ['hand', 'Privacy'],
  ['share', 'Sharing', true], ['sound', 'Sound'], ['power', 'Power'],
];
const facts = [
  ['Link speed', '10 Mb/s'], ['IPv4 Address', '192.168.88.124'], ['IPv6 Address', 'fe80::60d7:6b27:4e9b:fe22', 0.2],
  ['Hardware Address', '00:0C:29:9C:21:37'], ['DNS', '192.168.62.1'],
];

const Plus = () => <svg width="11" height="11" viewBox="0 0 11 11"><path d="M5.5 .5V10.5M.5 5.5H10.5" stroke="#2a2a2a" strokeWidth="2" /></svg>;
const Tick = () => <svg width="11" height="10" viewBox="0 0 11 10"><path d="M1.5 5L4.3 8L10 1.5" fill="none" stroke="#fff" strokeWidth="2" /></svg>;

function ConnectionDialog() {
  return (
    <Dialog>
      <DialogHead>
        <HeadButton $w={62} $ls={0.15}>Cancel</HeadButton>
        <Text as="b" $ls={0.2}>Wired</Text>
        <HeadButton $w={62} $go $ls={0.3}>Apply</HeadButton>
      </DialogHead>
      <TabStrip>
        <PageTab $w={63} $on><FocusRing>Details</FocusRing></PageTab>
        <PageTab $w={67}>Identity</PageTab>
        <PageTab $w={42} $ls={0}>IPv4</PageTab>
        <PageTab $w={42} $ls={0}>IPv6</PageTab>
        <PageTab $w={67}>Security</PageTab>
      </TabStrip>
      <Facts>
        {facts.map(([k, v, ls]) => (
          <React.Fragment key={k}><FactName>{k}</FactName><FactValue $ls={ls}>{v}</FactValue></React.Fragment>
        ))}
      </Facts>
      <CheckList>
        <CheckRow><Box $on><Tick /></Box><Text $ls={0.2}>Connect automatically</Text></CheckRow>
        <CheckRow><Box $on><Tick /></Box><Text>Make available to other users</Text></CheckRow>
        <CheckRow $h={46}>
          <Box />
          <CheckText><Text>Restrict background data usage</Text><Hint>Appropriate for connections that have data charges or limits.</Hint></CheckText>
        </CheckRow>
      </CheckList>
      <DialogFoot><RemoveButton>Remove Connection Profile</RemoveButton></DialogFoot>
    </Dialog>
  );
}

function GuestDesktop() {
  return (
    <Guest>
      <TopBar>
        <TopGroup $gap={0}>
          <Text $ls={0.35}>Activities</Text><StartGap $w={20} /><SettingsIcon s={15} /><AppName $ls={0.6}>Settings</AppName><Caret w={9} h={5} c="#dedad2" />
        </TopGroup>
        <TopGroup $gap={4}><Text $ls={0.3}>Sel 08:59</Text><svg width="8" height="8" viewBox="0 0 8 8"><circle cx="4" cy="4" r="4" fill="#dedad2" /></svg></TopGroup>
        <TopGroup $gap={13}><NetIcon /><VolIcon /><PowerIcon /><MenuCaret><Caret w={10} h={5} c="#dedad2" /></MenuCaret></TopGroup>
      </TopBar>
      <Desktop>
        <Dock>
          <DockItem $h={60}><DockTile><Files /></DockTile></DockItem>
          <DockItem $h={65}><DockTile><Rhythmbox /></DockTile></DockItem>
          <DockItem><DockTile><Writer /></DockTile></DockItem>
          <DockItem><DockTile><Software /></DockTile></DockItem>
          <DockItem $h={65}><DockTile><Help /></DockTile></DockItem>
          <DockItem $h={62}><DockTile><Amazon /></DockTile></DockItem>
          <DockItem $h={66}><Dot /><DockTile $on><SettingsIcon /></DockTile></DockItem>
          <DockItem $h={65}><Dot /><DockTile><Terminal /></DockTile></DockItem>
          <DockItem $h={60}><DockTile><AppGrid /></DockTile></DockItem>
        </Dock>
        <Window>
          <HeaderBar>
            <HeaderLeft><SearchButton><Lens s={14} c="#a3a099" w={2} /></SearchButton><HeaderTitle $pr={42} $ls={0.5}>Settings</HeaderTitle></HeaderLeft>
            <HeaderTitle $pl={73} $ls={0.15}>Network</HeaderTitle>
            <WindowButtons>
              <RoundButton><Line w={9} h={9} c="#1f1e1b" sw={1}><path d="M0 5H9" /></Line></RoundButton>
              <RoundButton><Line w={9} h={9} c="#1f1e1b" sw={1}><rect x="1" y="2" width="7" height="5" /></Line></RoundButton>
              <RoundButton $close><Cross s={6} c="#3b1306" w={1.8} /></RoundButton>
            </WindowButtons>
          </HeaderBar>
          <Panes>
            <SideList>
              {sideItems.map(([icon, label, sep], i) => (
                <SideRow key={label} $sep={sep} $alt={i % 2 === 1}><SideIcon>{sideIcons[icon]}</SideIcon><Text>{label}</Text></SideRow>
              ))}
            </SideList>
            <Content>
              <SectionHead $h={34}><Plus /></SectionHead>
              <Card $h={48} $mb={24}><GearButton /></Card>
              <SectionHead $h={34}><Plus /></SectionHead>
              <Card $h={51} $mb={24} />
              <Card $h={48} $mb={0}><GearButton /></Card>
            </Content>
          </Panes>
        </Window>
      </Desktop>
      <ConnectionDialog />
    </Guest>
  );
}

export default function App() {
  return (
    <Screen>
      <Global />
      <TitleBar>
        <VmLogo /><TitleText>JARKOM23-1831710120 - VMware Workstation</TitleText>
        <WinButtons>
          <Line w={11} h={11} c="#000" sw={1}><path d="M0 5.5H11" /></Line>
          <Line w={11} h={11} c="#000" sw={1}><path d="M2.5 2.5V.5H10.5V8.5H8.5" /><rect x=".5" y="2.5" width="8" height="8" /></Line>
          <Cross s={11} w={1} />
        </WinButtons>
      </TitleBar>
      <ToolBar>
        <MenuItem $w={34}>File</MenuItem><MenuItem $w={36}>Edit</MenuItem><MenuItem $w={41}>View</MenuItem>
        <MenuItem $w={34}>VM</MenuItem><MenuItem $w={40}>Tabs</MenuItem><MenuItem $w={37}>Help</MenuItem>
        <Sep />
        <Slot $w={58} $gap={11} $pl={2}><svg width="12" height="16" viewBox="0 0 12 16"><path d="M0 0H4V16H0ZM8 0H12V16H8Z" fill="#ff6a22" /></svg><Caret /></Slot>
        <Sep /><Slot $w={42}><SendKeys /></Slot><Sep $r={4} />
        <Slot $w={31}><ClockIcon mode="add" /></Slot><Slot $w={30}><ClockIcon mode="back" /></Slot><Slot $w={31}><ClockIcon mode="manage" /></Slot>
        <Sep $l={6} $r={8} />
        <Slot $w={26} $on $mr={2}><LibraryPane /></Slot><Slot $w={30}><BottomPane /></Slot><Slot $w={30}><FitGuest /></Slot><Slot $w={30}><Unity /></Slot>
        <Sep $l={6} $r={8} /><Slot $w={26} $on><ConsoleIcon /></Slot><Sep $l={8} $r={11} />
        <Slot $w={35} $gap={8}><FullIcon /><Caret /></Slot>
      </ToolBar>
      <Body>
        <Library>
          <LibraryHead><Text>Library</Text><Cross s={8} w={1.6} /></LibraryHead>
          <SearchBox><Lens flip /><SearchLabel $ls={-0.42}>Type here to search</SearchLabel><Caret w={8} h={4} c="#000" /></SearchBox>
          <Tree>
            <TreeRow $pad={8}>
              <Expander><Line w={9} h={9} c="#8f8f8f" sw={1}><rect x=".5" y=".5" width="8" height="8" /><path d="M2 4.5H7" stroke="#3f5fb0" /></Line></Expander>
              <Monitor /><TreeLabel $ls={-0.15}>My Computer</TreeLabel>
            </TreeRow>
            <TreeRow $pad={43}><VmRunning /><TreeLabel $sel $ls={-0.5}>JARKOM23-1831710120</TreeLabel></TreeRow>
            <TreeRow $pad={26}><SharedVm /><StartGap $w={1} /><TreeLabel>Shared VMs</TreeLabel></TreeRow>
          </Tree>
        </Library>
        <Main>
          <Tabs>
            <Tab $w={84}><HomeIcon /><TabLabel $ls={-1}>Home</TabLabel><Cross s={8} c="#c6c6c6" w={1.8} /></Tab>
            <Tab $w={187} $active><VmRunning /><TabLabel $ls={0.34}>JARKOM23-1831710120</TabLabel><Cross s={8} c="#c6c6c6" w={1.8} /></Tab>
          </Tabs>
          <Stage><GuestDesktop /></Stage>
        </Main>
      </Body>
      <StatusBar><StatusText $ls={-0.25}>To direct input to this VM, click inside or press Ctrl+G.</StatusText><StatusSet /></StatusBar>
      <TaskBar>
        <TaskButtons>
          <TaskButton><WinStart /></TaskButton>
          <TaskButton><Lens s={16} c="#fff" w={1.1} flip /></TaskButton>
          <TaskButton><TaskView /></TaskButton>
          <TaskButton $open><Explorer /></TaskButton>
          <TaskButton $bg="#a35a24" $wide="#ff7800"><Edge /></TaskButton>
          <TaskButton><Mail /></TaskButton>
          <TaskButton><Store /></TaskButton>
          <TaskButton><Code /></TaskButton>
          <TaskButton><Xampp /></TaskButton>
          <TaskButton $open><Chrome /></TaskButton>
          <TaskButton $bg="linear-gradient(90deg, #545352 44px, #3a3938 44px, #3a3938 45px, #4b4a49 45px)" $wide="#76b9ed"><VmLogo s={24} /></TaskButton>
          <TaskButton $open><Paint /></TaskButton>
        </TaskButtons>
        <Tray>
          <TrayItem $w={36}><People /></TrayItem><TrayItem $w={36}><Chevron /></TrayItem><TrayItem $w={13}><Battery /></TrayItem>
          <TrayItem $w={34}><TrayVolume /></TrayItem><TrayItem $w={26}>ENG</TrayItem>
          <StartGap $w={5} /><Clock>8:59<br />03/09/2019</Clock><Notice><NoticeIcon /><Badge>2</Badge></Notice>
        </Tray>
      </TaskBar>
    </Screen>
  );
}
